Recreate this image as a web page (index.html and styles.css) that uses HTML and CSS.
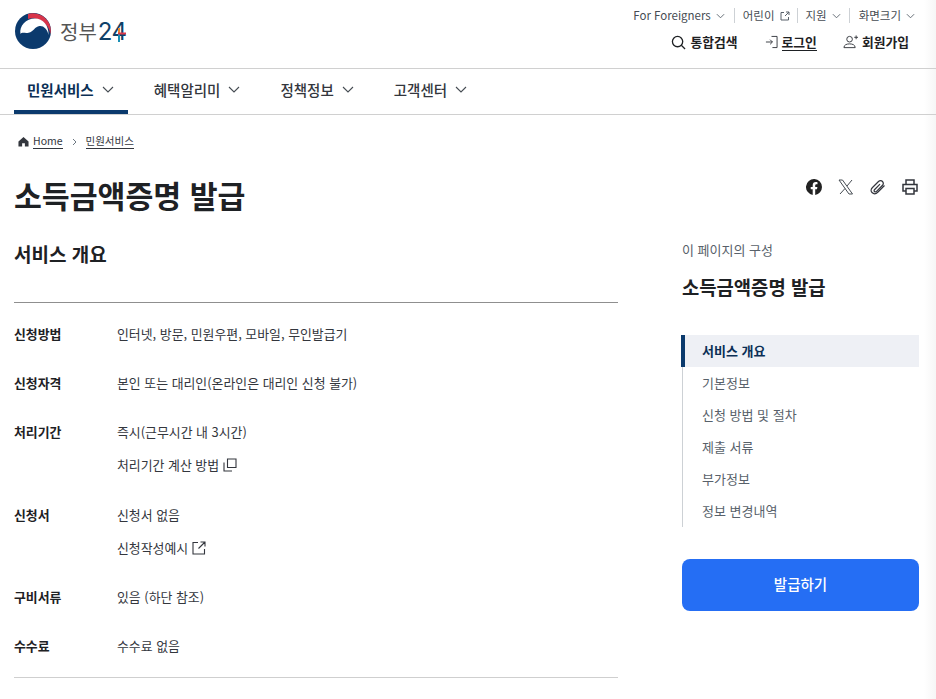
FILE: index.html
```html
<!DOCTYPE html>
<html lang="ko">
<head>
<meta charset="utf-8">
<title>소득금액증명 발급</title>
<link rel="stylesheet" href="styles.css">
</head>
<body>
<div class="page">
<header class="top">
  <a class="logo">
    <svg class="emblem" width="38" height="36" viewBox="0 0 38 36"><circle cx="19" cy="18" r="18" fill="#0b3a6d"/><path d="M14 .9C22-1 31 2 35.500 11c1.500 3.500 1.600 7 .8 10C35 13 29 6.500 21 5.500c-3-.4-5-.2-7 .4z" fill="#d8344a"/><path d="M6.500 21C5 13 12 5.500 21 5.500c8 0 14 7 13.500 16.500-1-6-5-9.500-9-9-5 .6-5.500 5.500-11 6.800-3.500.8-6.500-1-8 1.200z" fill="#fff"/></svg>
    <span class="logo-ko">정부</span><span class="logo-num">24<svg class="plus" viewBox="0 0 12 14"><path d="M3 0v6" stroke="#ef8a2c" stroke-width="2"/><path d="M3 6v8" stroke="#1a8fb5" stroke-width="2"/><path d="M2 5.500h8" stroke="#dc3a4a" stroke-width="2"/></svg></span>
  </a>
  <div class="top-right">
    <ul class="util">
      <li>For Foreigners <svg class="chev-s" viewBox="0 0 10 6"><path d="M1 1l4 4 4-4"/></svg></li>
      <li>어린이 <svg class="ext-s" viewBox="0 0 10 10"><path d="M4 1.500H1v7.500h7.500V6M6 1h3v3M9 1L5 5"/></svg></li>
      <li>지원 <svg class="chev-s" viewBox="0 0 10 6"><path d="M1 1l4 4 4-4"/></svg></li>
      <li>화면크기 <svg class="chev-s" viewBox="0 0 10 6"><path d="M1 1l4 4 4-4"/></svg></li>
    </ul>
    <div class="actions">
      <a><svg class="i-search" viewBox="0 0 16 16"><circle cx="7" cy="7" r="5.500"/><path d="M11 11l4 4"/></svg>통합검색</a>
      <a class="login"><svg class="i-login" viewBox="0 0 14 14"><path d="M1 7h7M5.500 4.500L8 7l-2.500 2.500M7 1h6v12H8"/></svg><span class="ul">로그인</span></a>
      <a><svg class="i-join" viewBox="0 0 16 14"><circle cx="7" cy="4" r="3"/><path d="M1 13c0-3 3-4 6-4s6 1 6 4zM12 2h4M14 0v4"/></svg>회원가입</a>
    </div>
  </div>
</header>
<nav class="gnb">
  <a class="on">민원서비스 <svg class="chev" viewBox="0 0 12 7"><path d="M1 1l5 5 5-5"/></svg></a>
  <a>혜택알리미 <svg class="chev" viewBox="0 0 12 7"><path d="M1 1l5 5 5-5"/></svg></a>
  <a>정책정보 <svg class="chev" viewBox="0 0 12 7"><path d="M1 1l5 5 5-5"/></svg></a>
  <a>고객센터 <svg class="chev" viewBox="0 0 12 7"><path d="M1 1l5 5 5-5"/></svg></a>
</nav>
<div class="crumbs">
  <svg class="home" viewBox="0 0 12 12"><path d="M6 1L.5 6v5.500h4V8h3v3.500h4V6z"/></svg>
  <a>Home</a>
  <svg class="crumb-sep" viewBox="0 0 5 8"><path d="M1 1l3 3-3 3"/></svg>
  <a>민원서비스</a>
</div>
<div class="title-row">
  <h1>소득금액증명 발급</h1>
  <div class="share">
    <svg viewBox="0 0 16 16"><path fill="#222" d="M16 8a8 8 0 1 0-9.300 7.900v-5.600H4.700V8h2V6.200c0-2 1.200-3.100 3-3.100.9 0 1.800.2 1.800.2v2h-1c-1 0-1.300.6-1.300 1.200V8h2.200l-.4 2.300H9.200v5.600A8 8 0 0 0 16 8z"/></svg>
    <svg viewBox="0 0 16 16"><path class="sl thin" d="M1 1h3.500l10 14H11zM14 1L9 7M7 9.500L2 15"/></svg>
    <svg viewBox="0 0 16 16"><path class="sl" d="M14.500 6.500L8 13c-2 2-4.500 2-6 .5s-1-3.500.5-5L8.500 2.500c1.200-1.200 3-1.200 4 0s1 2.800-.2 4L6.500 12.300c-.7.700-1.500.7-2 .2s-.5-1.300.2-2L10 5.200"/></svg>
    <svg class="print" viewBox="0 0 16 16"><path class="sl" d="M4 5V1h8v4M4 12H1V5.500h14V12h-3M4 9.500h8V15H4z"/></svg>
  </div>
</div>
<div class="columns">
  <main class="content">
    <h2>서비스 개요</h2>
    <dl class="info">
      <div class="row"><dt>신청방법</dt><dd><p>인터넷, 방문, 민원우편, 모바일, 무인발급기</p></dd></div>
      <div class="row"><dt>신청자격</dt><dd><p>본인 또는 대리인(온라인은 대리인 신청 불가)</p></dd></div>
      <div class="row"><dt>처리기간</dt><dd><p>즉시(근무시간 내 3시간)</p><p>처리기간 계산 방법 <svg class="i-copy" viewBox="0 0 14 14"><path d="M4.500 1h8.500v8.500H4.500zM1 4.500V13h8"/></svg></p></dd></div>
      <div class="row"><dt>신청서</dt><dd><p>신청서 없음</p><p>신청작성예시 <svg class="i-ext" viewBox="0 0 14 14"><path d="M6 1.500H1v11.500h11.500V8M8.500 1H13v4.500M13 1L6.500 7.500"/></svg></p></dd></div>
      <div class="row"><dt>구비서류</dt><dd><p>있음 (하단 참조)</p></dd></div>
      <div class="row"><dt>수수료</dt><dd><p>수수료 없음</p></dd></div>
    </dl>
  </main>
  <aside class="side">
    <p class="side-label">이 페이지의 구성</p>
    <p class="side-title">소득금액증명 발급</p>
    <ul class="toc">
      <li class="on">서비스 개요</li>
      <li>기본정보</li>
      <li>신청 방법 및 절차</li>
      <li>제출 서류</li>
      <li>부가정보</li>
      <li>정보 변경내역</li>
    </ul>
    <button class="issue">발급하기</button>
  </aside>
</div>
</div>
</body>
</html>
```

FILE: styles.css
```css
* { box-sizing: border-box; }
html, body { margin: 0; padding: 0; height: 699px; overflow: hidden; background: #fff; }
body { font-family: "Noto Sans CJK KR", "Noto Sans", sans-serif; color: #1e2124; font-size: 13px; }
p, ul, dl, dd, h1, h2 { margin: 0; padding: 0; }
ul { list-style: none; }
.page { height: 699px; background: linear-gradient(to right, #fff 924px, #f6f6f6 936px); }

.top { height: 69px; border-bottom: 1px solid #d0d0d0; display: flex; justify-content: space-between; padding: 0 21px 0 14px; }
.logo { display: flex; align-items: center; padding-bottom: 6px; }
.emblem { margin-right: 7px; }
.logo-ko { font-size: 20px; color: #555; margin-left: 1px; margin-right: 1px; }
.logo-num { position: relative; font-family: "Inter", sans-serif; font-size: 24px; color: #0f4169; letter-spacing: -.5px; }
.plus { position: absolute; left: 18px; top: 11px; width: 12px; height: 14px; fill: none; }
.top-right { display: flex; flex-direction: column; align-items: flex-end; }
.util { display: flex; align-items: center; height: 15px; margin-top: 8px; font-size: 11.500px; color: #464c53; }
.util li { display: flex; align-items: center; gap: 5px; padding: 0 8px; border-left: 1px solid #cdd1d5; line-height: 15px; }
.util li:first-child { border-left: 0; padding-right: 9px; }
.util li:nth-child(2) { padding-right: 7px; }
.util li:last-child { padding: 0 0 0 9px; }
.chev-s { width: 9px; height: 6px; fill: none; stroke: #58616a; stroke-width: 1; }
.ext-s { width: 10px; height: 10px; fill: none; stroke: #58616a; stroke-width: 1; }
.actions { display: flex; gap: 27px; margin-top: 9px; padding-right: 6px; font-size: 12.800px; font-weight: 700; color: #1e2124; }
.actions a { display: flex; align-items: center; gap: 4px; line-height: 20px; }
.actions a.login { margin-right: -1px; }
.ul { border-bottom: 1px solid #1e2124; line-height: 17px; }
.i-search { width: 15px; height: 15px; fill: none; stroke: #1e2124; stroke-width: 1.400; }
.i-login { width: 13px; height: 14px; fill: none; stroke: #33363d; stroke-width: 1; }
.i-join { width: 15px; height: 14px; fill: none; stroke: #33363d; stroke-width: 1; }

.gnb { height: 46px; border-bottom: 1px solid #d0d0d0; display: flex; padding-left: 14px; font-size: 14.500px; font-weight: 500; color: #33363d; gap: 14px; }
.gnb a { display: flex; align-items: center; gap: 8px; padding: 0 13px 4px; height: 45px; }
.gnb a.on { color: #0b2f55; font-weight: 700; border-bottom: 4px solid #0b3a6d; padding: 0 14px 0 13px; margin-right: -1px; }
.chev { width: 12px; height: 7px; fill: none; stroke: #464c53; stroke-width: 1.100; }

.crumbs { display: flex; align-items: center; height: 16px; margin-top: 18px; padding-left: 18px; font-size: 10.500px; color: #33363d; }
.crumbs a { border-bottom: 1px solid #33363d; line-height: 15px; }
.home { width: 11px; height: 11px; fill: #33363d; margin-right: 4px; }
.crumb-sep { width: 5px; height: 8px; fill: none; stroke: #6d7882; margin: 2px 9px 0 9px; }

.title-row { display: flex; justify-content: space-between; align-items: center; margin-top: 23px; padding: 0 18px 0 14px; height: 46px; }
h1 { font-size: 30.300px; font-weight: 700; line-height: 46px; color: #1e2124; }
.share { display: flex; gap: 16px; margin-bottom: 16px; }
.share svg { width: 16px; height: 16px; }
.sl { fill: none; stroke: #33363d; stroke-width: 1.200; }
.sl.thin { stroke: #464c53; stroke-width: 1; }
.print .sl { stroke-width: 1.500; }

.columns { display: flex; padding: 0 17px 0 14px; margin-top: 22px; }
.content { width: 604px; }
h2 { font-size: 19px; font-weight: 700; line-height: 28px; height: 62px; margin-top: 0; }
.info { border-top: 1px solid #8f8f8f; border-bottom: 1px solid #cfcfcf; padding: 6px 0 7px; }
.row { display: flex; padding: 16px 0; font-size: 12.900px; }
.row:nth-child(3) { padding-bottom: 17px; }
.row dt { width: 103px; font-weight: 700; line-height: 17px; }
.row dd { display: flex; flex-direction: column; gap: 16px; }
.row dd p { line-height: 17px; color: #33363d; display: flex; align-items: center; gap: 4px; }
.i-copy, .i-ext { width: 14px; height: 14px; fill: none; stroke: #33363d; stroke-width: 1.100; }

.side { width: 237px; margin-left: 64px; margin-top: 0; }
.side-label { font-size: 13px; color: #58616a; line-height: 20px; }
.side-title { font-size: 18.800px; font-weight: 700; line-height: 26px; margin-top: 14px; color: #1e2124; }
.toc { margin-top: 35px; border-left: 1px solid #cdd1d5; }
.toc li { height: 32px; line-height: 32px; padding-left: 19px; font-size: 13px; color: #58616a; }
.toc li.on { background: #eef0f5; color: #0b2f55; font-weight: 700; border-left: 4px solid #0b3a6d; margin-left: -2px; padding-left: 17px; }
.issue { display: block; width: 237px; height: 52px; margin-top: 32px; padding: 0 0 3px; border: 0; border-radius: 8px; background: #256ef4; color: #fff; font: 500 14.500px "Noto Sans CJK KR", sans-serif; }
```
